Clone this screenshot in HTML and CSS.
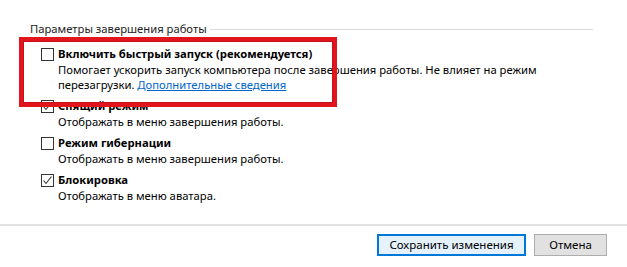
FILE: index.html
```html
<!DOCTYPE html>
<html lang="ru">
<head>
<meta charset="utf-8">
<title>Параметры завершения работы</title>
<link rel="stylesheet" href="styles.css">
</head>
<body>
<div class="page">
  <div class="section">
    <div class="legend"><span class="legend-text">Параметры завершения работы</span><span class="rule"></span></div>
    <div class="options">
      <div class="option">
        <div class="title"><span class="cb"></span><span>Включить быстрый запуск (рекомендуется)</span></div>
        <div class="desc">Помогает ускорить запуск компьютера после завершения работы. Не влияет на режим<br>перезагрузки. <a class="link" href="#">Дополнительные сведения</a></div>
      </div>
      <div class="option">
        <div class="title"><span class="cb checked"><svg viewBox="0 0 13 13" width="13" height="13"><polyline points="2.5,6.5 5,9.5 10.5,2.5" fill="none" stroke="#333" stroke-width="1.1"/></svg></span><span>Спящий режим</span></div>
        <div class="desc">Отображать в меню завершения работы.</div>
      </div>
      <div class="option">
        <div class="title"><span class="cb"></span><span>Режим гибернации</span></div>
        <div class="desc">Отображать в меню завершения работы.</div>
      </div>
      <div class="option">
        <div class="title"><span class="cb checked"><svg viewBox="0 0 13 13" width="13" height="13"><polyline points="2.5,6.5 5,9.5 10.5,2.5" fill="none" stroke="#333" stroke-width="1.1"/></svg></span><span>Блокировка</span></div>
        <div class="desc">Отображать в меню аватара.</div>
      </div>
    </div>
    <div class="highlight"></div>
  </div>
  <div class="footer">
    <button class="btn primary">Сохранить изменения</button>
    <button class="btn">Отмена</button>
  </div>
</div>
</body>
</html>
```
FILE: styles.css
```css
html, body {
  margin: 0;
  padding: 0;
  background: #ffffff;
}
body {
  font-family: "Noto Sans", "Open Sans", sans-serif;
  font-size: 11.25px;
  color: #000;
  width: 627px;
  height: 267px;
  overflow: hidden;
}
.page {
  display: flex;
  flex-direction: column;
}
.section {
  position: relative;
  padding: 21px 34px 0 30px;
  height: 203px;
  box-sizing: border-box;
}
.legend {
  display: flex;
  align-items: center;
  gap: 3px;
  line-height: 16px;
  color: #222;
}
.rule {
  flex: 1;
  height: 1px;
  background: #dcdcdc;
  margin-top: 1px;
}
.options {
  margin-top: 9px;
  padding-left: 11px;
  display: flex;
  flex-direction: column;
  gap: 6px;
}
.title {
  display: flex;
  align-items: center;
  gap: 4px;
  font-weight: 700;
  line-height: 16px;
  height: 16px;
}
.cb {
  width: 13px;
  height: 13px;
  box-sizing: border-box;
  border: 1px solid #333;
  background: #fff;
  position: relative;
  flex: none;
  margin-top: 1px;
}
.cb svg {
  position: absolute;
  left: -1px;
  top: -1px;
}
.desc {
  padding-left: 17px;
  line-height: 15px;
}
.link {
  color: #0066cc;
  text-decoration: underline;
}
.highlight {
  position: absolute;
  left: 19px;
  top: 37px;
  width: 318px;
  height: 70px;
  box-sizing: border-box;
  border: 4px solid #e3151c;
  box-shadow: inset 0 0 0 1px #c81018;
}
.footer {
  border-top: 2px solid #e2e2e2;
  margin-top: 21px;
  padding: 8px 20px 0 0;
  display: flex;
  justify-content: flex-end;
  gap: 8px;
}
.btn {
  font-family: inherit;
  font-size: 11.5px;
  height: 22px;
  margin: 0;
  padding: 0;
  background: #e1e1e1;
  border: 1px solid #adadad;
  color: #000;
  line-height: 18px;
}
.btn.primary {
  width: 149px;
  border: 2px solid #0078d7;
  background: #e5f1fb;
}
.btn:not(.primary) {
  width: 73px;
}
```
